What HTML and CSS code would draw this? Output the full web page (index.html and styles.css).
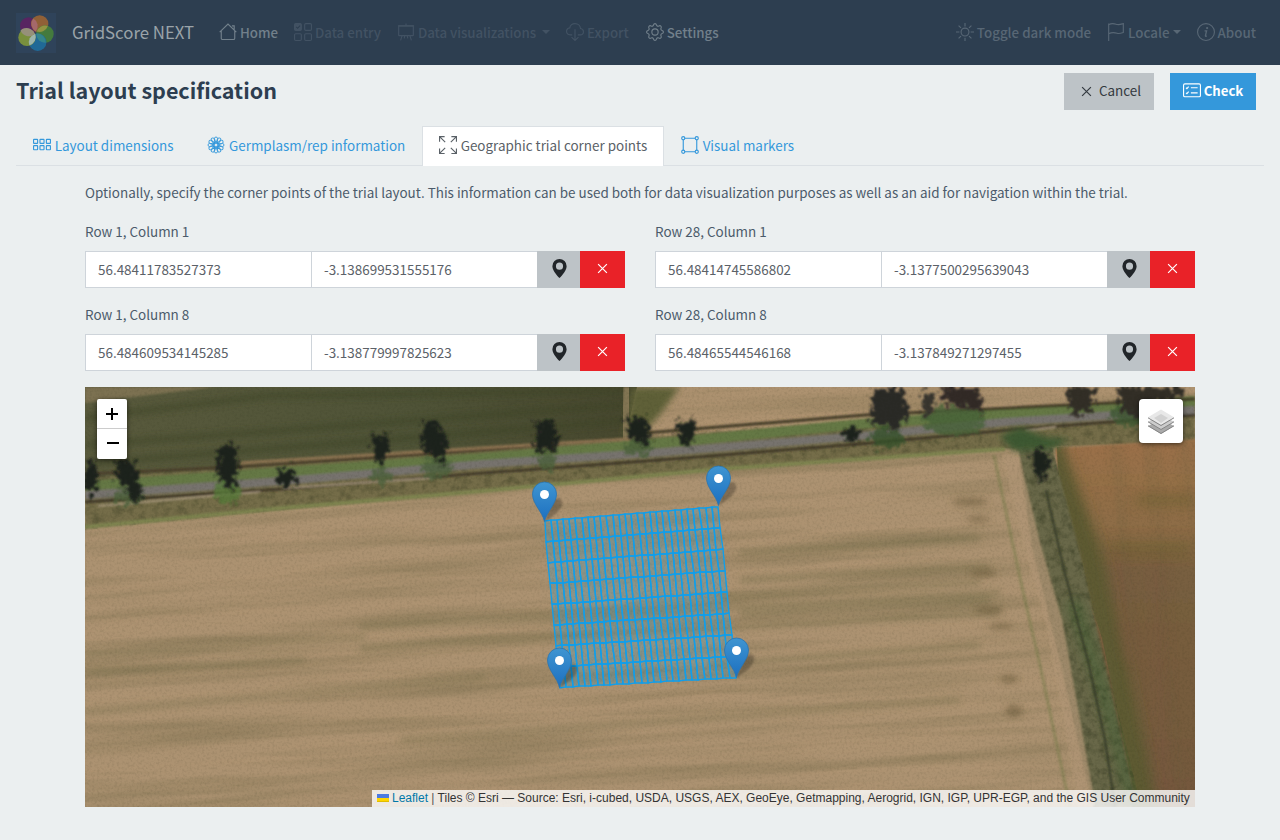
FILE: index.html
```html
<!DOCTYPE html>
<html lang="en">
<head>
<meta charset="utf-8">
<title>GridScore NEXT</title>
<link rel="stylesheet" href="styles.css">
</head>
<body>
<nav class="navbar">
  <svg class="logo" viewBox="0 0 40 40">
    <rect width="40" height="40" fill="#2f435a"/>
    <circle cx="12.700" cy="13" r="8.700" fill="#582461"/>
    <circle cx="23.700" cy="11" r="8.700" fill="#966236" fill-opacity=".95"/>
    <circle cx="29" cy="21" r="8.700" fill="#467d3c" fill-opacity=".95"/>
    <circle cx="21.700" cy="29.200" r="8.700" fill="#206c9a" fill-opacity=".95"/>
    <circle cx="11" cy="24.400" r="8.700" fill="#7d943c" fill-opacity=".95"/>
    <path d="M17.300 5.500a8.700 8.700 0 0 1 2.500 13a8.700 8.700 0 0 1-2.500-13z" fill="#a5686a"/>
    <path d="M20.800 18.500a8.700 8.700 0 0 1 11-5.500a8.700 8.700 0 0 1-11 5.500z" fill="#929443"/>
    <path d="M20.300 20.500a8.700 8.700 0 0 1 9.500 9.200a8.700 8.700 0 0 1-9.500-9.200z" fill="#35858a"/>
    <path d="M19.200 20.700a8.700 8.700 0 0 1-5.800 11.500a8.700 8.700 0 0 1 5.800-11.500z" fill="#9db4ac"/>
    <path d="M4.500 17.500a8.700 8.700 0 0 1 14.300 3.200a8.700 8.700 0 0 1-14.300-3.200z" fill="#96907a"/>
  </svg>
  <span class="brand">GridScore NEXT</span>
  <div class="nav-items">
    <a class="nav-link home"><svg class="icon" viewBox="0 0 16 16"><path d="M.6 8.100 8 .9l7.400 7.200M2 7v6.500a1.200 1.200 0 0 0 1.200 1.200h9.600a1.200 1.200 0 0 0 1.200-1.200V7M11.500 2.500h2v3.800"/></svg><span>Home</span></a>
    <a class="nav-link entry off"><svg class="icon" viewBox="0 0 16 16"><rect x=".5" y=".5" width="6" height="6" rx="1" fill="currentColor"/><rect x="9.500" y=".5" width="6" height="6" rx="1"/><rect x=".5" y="9.500" width="6" height="6" rx="1"/><rect x="9.500" y="9.500" width="6" height="6" rx="1"/><path d="m2 3.500 1.200 1.200 2.200-2.400" stroke="#2d3e50"/></svg><span>Data entry</span></a>
    <a class="nav-link visuals off"><svg class="icon" viewBox="0 0 16 16"><rect x="1.500" y="2.500" width="13" height="8.700" rx=".4"/><path d="M.8 2.500h14.400M8 .5v2M4.500 11.200l-1.300 4.300M11.500 11.200l1.300 4.300M6.800 11.200l-.3 2.500M9.200 11.200l.3 2.500"/></svg><span>Data visualizations</span><i class="caret"></i></a>
    <a class="nav-link export off"><svg class="icon" viewBox="0 0 16 16"><path d="M5.500 10.500H3.800C2 10.500.5 9.200.5 7.400c0-1.600 1.200-2.900 2.900-3.100C3.600 2.100 5.700.5 8 .5c2.600 0 4.700 1.900 4.900 4.400 1.500.2 2.600 1.300 2.600 2.800 0 1.600-1.300 2.800-2.900 2.800h-2.100M8 5.500v10M4.900 12.500 8 15.500l3.100-3"/></svg><span>Export</span></a>
    <a class="nav-link settings"><svg class="icon" viewBox="0 0 16 16"><circle cx="8" cy="8" r="2.800"/><path d="M6.700 1.700c.4-1.500 2.200-1.500 2.600 0a1.400 1.400 0 0 0 2.200.9c1.300-.8 2.600.5 1.900 1.900a1.400 1.400 0 0 0 .9 2.100c1.600.5 1.600 2.300 0 2.800a1.400 1.400 0 0 0-.9 2.100c.7 1.400-.6 2.700-1.900 1.900a1.400 1.400 0 0 0-2.200.9c-.4 1.500-2.200 1.500-2.600 0a1.400 1.400 0 0 0-2.200-.9c-1.300.8-2.600-.5-1.900-1.900a1.400 1.400 0 0 0-.9-2.100c-1.600-.5-1.600-2.300 0-2.800a1.400 1.400 0 0 0 .9-2.100c-.7-1.400.6-2.700 1.900-1.900a1.400 1.400 0 0 0 2.200-.9z"/></svg><span>Settings</span></a>
  </div>
  <div class="nav-items nav-right">
    <a class="nav-link dark"><svg class="icon" viewBox="0 0 16 16"><circle cx="8" cy="8" r="3.500"/><path d="M8 0v3M8 13v3M0 8h3M13 8h3M2.300 2.300l2.100 2.100M11.600 11.600l2.100 2.100M2.300 13.700l2.100-2.100M11.600 4.400l2.100-2.100"/></svg><span>Toggle dark mode</span></a>
    <a class="nav-link locale"><svg class="icon" viewBox="0 0 16 16"><path d="M1.500 16V.5M1.500 1.500C5-.5 7.500 1 9 1.300c2 .5 3.500-.2 5.500-.8v7.900c-2 .7-3.700 1.300-5.500.7-2.500-.8-4-1.300-7.500.4"/></svg><span>Locale</span><i class="caret"></i></a>
    <a class="nav-link about"><svg class="icon" viewBox="0 0 16 16"><circle cx="8" cy="8" r="7.500"/><circle cx="9" cy="4.500" r="1" fill="currentColor" stroke="none"/><path d="M6.700 7h1.800l-1 4.200c-.1.700.5.700 1.200.3" stroke-width="1.200"/></svg><span>About</span></a>
  </div>
</nav>

<header class="page-head">
  <h1>Trial layout specification</h1>
  <button class="btn cancel"><svg class="x-icon" viewBox="0 0 10 10"><path d="m1 1 8 8M9 1 1 9"/></svg><span>Cancel</span></button>
  <button class="btn check"><svg class="icon" viewBox="0 0 16 16"><rect x=".5" y="2.500" width="15" height="11.500" rx="1.200"/><path d="M7 6h6M7 10.500h6M2.700 6l.8.800L5 5M2.700 10.500l.8.800L5 9.500"/></svg><span>Check</span></button>
</header>

<div class="tabs">
  <a class="tab t1"><svg class="icon" viewBox="0 0 16 16"><rect x=".5" y="3" width="3.600" height="3.600" rx=".4"/><rect x="6.200" y="3" width="3.600" height="3.600" rx=".4"/><rect x="11.900" y="3" width="3.600" height="3.600" rx=".4"/><rect x=".5" y="8.600" width="3.600" height="3.600" rx=".4"/><rect x="6.200" y="8.600" width="3.600" height="3.600" rx=".4"/><rect x="11.900" y="8.600" width="3.600" height="3.600" rx=".4"/></svg><span>Layout dimensions</span></a>
  <a class="tab t2"><svg class="icon" viewBox="0 0 16 16"><circle cx="8" cy="8" r="1.900"/><g id="petals"></g></svg><span>Germplasm/rep information</span></a>
  <a class="tab active"><svg class="icon" viewBox="0 0 16 16"><path d="M.5 5V.5H5M.5.5l5 5M11 .5h4.500V5M15.500.5l-5 5M.5 11v4.500H5M.5 15.500l5-5M11 15.500h4.500V11M15.500 15.500l-5-5"/></svg><span>Geographic trial corner points</span></a>
  <a class="tab t4"><svg class="icon" viewBox="0 0 16 16"><path d="M3.200 2h9.600M3.200 14h9.600M2 3.200v9.600M14 3.200v9.600"/><circle cx="2" cy="2" r="1.400"/><circle cx="14" cy="2" r="1.400"/><circle cx="2" cy="14" r="1.400"/><circle cx="14" cy="14" r="1.400"/></svg><span>Visual markers</span></a>
</div>

<main class="content">
  <p class="intro">Optionally, specify the corner points of the trial layout. This information can be used both for data visualization purposes as well as an aid for navigation within the trial.</p>
  <div class="corners">
    <section class="corner"><label>Row 1, Column 1</label><div class="group"><div class="field">56.48411783527373</div><div class="field lng">-3.138699531555176</div><button class="pin"><svg viewBox="0 0 16 16"><path fill-rule="evenodd" d="M8 16s6-5.700 6-10A6 6 0 0 0 2 6c0 4.300 6 10 6 10zm0-7a3 3 0 1 1 0-6 3 3 0 0 1 0 6z"/></svg></button><button class="clear"><svg class="x-icon" viewBox="0 0 10 10"><path d="m1 1 8 8M9 1 1 9"/></svg></button></div></section>
    <section class="corner"><label>Row 28, Column 1</label><div class="group"><div class="field">56.48414745586802</div><div class="field lng">-3.1377500295639043</div><button class="pin"><svg viewBox="0 0 16 16"><path fill-rule="evenodd" d="M8 16s6-5.700 6-10A6 6 0 0 0 2 6c0 4.300 6 10 6 10zm0-7a3 3 0 1 1 0-6 3 3 0 0 1 0 6z"/></svg></button><button class="clear"><svg class="x-icon" viewBox="0 0 10 10"><path d="m1 1 8 8M9 1 1 9"/></svg></button></div></section>
    <section class="corner"><label>Row 1, Column 8</label><div class="group"><div class="field">56.484609534145285</div><div class="field lng">-3.138779997825623</div><button class="pin"><svg viewBox="0 0 16 16"><path fill-rule="evenodd" d="M8 16s6-5.700 6-10A6 6 0 0 0 2 6c0 4.300 6 10 6 10zm0-7a3 3 0 1 1 0-6 3 3 0 0 1 0 6z"/></svg></button><button class="clear"><svg class="x-icon" viewBox="0 0 10 10"><path d="m1 1 8 8M9 1 1 9"/></svg></button></div></section>
    <section class="corner"><label>Row 28, Column 8</label><div class="group"><div class="field">56.48465544546168</div><div class="field lng">-3.137849271297455</div><button class="pin"><svg viewBox="0 0 16 16"><path fill-rule="evenodd" d="M8 16s6-5.700 6-10A6 6 0 0 0 2 6c0 4.300 6 10 6 10zm0-7a3 3 0 1 1 0-6 3 3 0 0 1 0 6z"/></svg></button><button class="clear"><svg class="x-icon" viewBox="0 0 10 10"><path d="m1 1 8 8M9 1 1 9"/></svg></button></div></section>
  </div>

  <div class="map">
    <svg class="terrain" viewBox="85 387 1110 420">
      <defs>
        <filter id="streak" x="0" y="0" width="100%" height="100%" color-interpolation-filters="sRGB"><feTurbulence type="fractalNoise" baseFrequency=".003 .06" numOctaves="4" seed="8"/><feColorMatrix values="0 0 0 0 .42  0 0 0 0 .39  0 0 0 0 .26  2.600 0 0 0 -1.120"/></filter>
        <filter id="light" x="0" y="0" width="100%" height="100%" color-interpolation-filters="sRGB"><feTurbulence type="fractalNoise" baseFrequency=".004 .12" numOctaves="3" seed="21"/><feColorMatrix values="0 0 0 0 .76  0 0 0 0 .63  0 0 0 0 .49  1.800 0 0 0 -.85"/></filter>
        <filter id="grain" x="0" y="0" width="100%" height="100%" color-interpolation-filters="sRGB"><feTurbulence type="fractalNoise" baseFrequency=".4" numOctaves="2" seed="3"/><feColorMatrix values="0 0 0 0 .1  0 0 0 0 .12  0 0 0 0 .05  1.400 0 0 0 -.6"/></filter>
        <filter id="clump" x="0" y="0" width="100%" height="100%" color-interpolation-filters="sRGB"><feTurbulence type="fractalNoise" baseFrequency=".13" numOctaves="3" seed="5"/><feColorMatrix values="0 0 0 0 .18  0 0 0 0 .2  0 0 0 0 .11  2.400 0 0 0 -1.050"/></filter>
        <filter id="rough" x="-30%" y="-30%" width="160%" height="160%"><feTurbulence type="fractalNoise" baseFrequency=".2" numOctaves="3" seed="4" result="n"/><feDisplacementMap in="SourceGraphic" in2="n" scale="20" xChannelSelector="R" yChannelSelector="G"/><feGaussianBlur stdDeviation=".8"/></filter>
        <filter id="soft1" x="-10%" y="-10%" width="120%" height="120%"><feGaussianBlur stdDeviation="1"/></filter>
        <filter id="soft3" x="-30%" y="-30%" width="160%" height="160%"><feGaussianBlur stdDeviation="3"/></filter>
        <filter id="soft5" x="-30%" y="-30%" width="160%" height="160%"><feGaussianBlur stdDeviation="6"/></filter>
        <linearGradient id="brown" x1="0" y1="0" x2="0" y2="1"><stop offset="0" stop-color="#9c7149"/><stop offset=".23" stop-color="#8e6d46"/><stop offset=".36" stop-color="#785f3f"/><stop offset="1" stop-color="#75593d"/></linearGradient>
        <linearGradient id="green" x1="0" y1="0" x2="1" y2="0"><stop offset="0" stop-color="#595a3d"/><stop offset=".6" stop-color="#4f5337"/><stop offset="1" stop-color="#47472e"/></linearGradient>
        <linearGradient id="pinfill" x1="0" y1="0" x2="0" y2="1"><stop offset="0" stop-color="#3f95d1"/><stop offset="1" stop-color="#1c6fc0"/></linearGradient>
        <clipPath id="hedge"><path d="M1016 447h36l29 110 60 250h-48l-34-150-27-110z"/></clipPath>
        <clipPath id="plough"><path d="M1057 447l140-9v370h-60l-35-170-43-130z"/></clipPath>
        <clipPath id="verge"><path d="M85 476 640 435l555-38v44l-190 7-285 20-237 22-398 40z"/></clipPath>
      </defs>

      <rect x="85" y="387" width="1110" height="420" fill="#ac9271"/>
      <path d="M632 387h563v30l-335 10-235 14z" fill="#ad9270"/>

      <g transform="rotate(-3.500 640 600)"><rect x="50" y="330" width="1200" height="530" filter="url(#streak)" opacity=".34"/><rect x="50" y="330" width="1200" height="530" filter="url(#light)" opacity=".16"/></g>
      <g fill="none" stroke="#67653f" filter="url(#soft3)" opacity=".38">
        <path d="M740 553l240-15M740 580l250-13M720 597l260-15M740 614l250-14M360 627l640-34M360 648l640-36M710 665l270-20" stroke-width="6"/>
        <path d="M85 655l280-18M85 672l220-12M85 712l400-35M400 740l560-40" stroke-width="5"/>
      </g>
      <path d="M85 387h552l-12 54-540 39z" fill="url(#green)"/>
      <path d="M85 387h130L85 403z" fill="#7b7151" filter="url(#soft1)"/>
      <path d="M85 418l180-22 365-5M85 445l540-40M90 463l533-42" fill="none" stroke="#3c4427" stroke-width="6" filter="url(#soft3)" opacity=".6"/>
      <path d="M632 387h48l-18 25-22 25h-16z" fill="#5e6038" filter="url(#soft3)"/>
      <path d="M628 387l-4 52" stroke="#827453" stroke-width="9" filter="url(#soft1)"/>

      <path d="M85 478 640 438l200-14 355-24v42l-190 7-285 20-237 22-398 37z" fill="#756d4a" filter="url(#soft1)"/>
      <g clip-path="url(#verge)"><rect x="85" y="387" width="1110" height="150" filter="url(#clump)" opacity=".32"/></g>
      <g fill="none" filter="url(#soft1)">
        <path d="M85 486 483 458l190-16 187-18 335-23" stroke="#657845" stroke-width="10"/>
        <path d="M85 474 235 467l250-17 120-10" stroke="#4a3d29" stroke-width="2.500"/>
        <path d="M240 463l240-15 150-9" stroke="#8f7452" stroke-width="3"/>
        <path d="M645 433l220-18 330-16" stroke="#423b27" stroke-width="3"/>
        <path d="M85 495 283 481l200-17 182-12 195-16 145-14 190-12" stroke="#77736e" stroke-width="8"/>
        <path d="M85 502 283 489l200-16 177-13 200-16 150-14 185-15" stroke="#3c3427" stroke-width="2.500"/>
        <path d="M98 506l162-14M283 488l150-10M1026 431l30-4" stroke="#b3a189" stroke-width="1.500"/>
        <path d="M85 527 283 508l200-17 237-22 285-20" stroke="#7e8450" stroke-width="4"/>
      </g>

      <path d="M1055 448l145-9v370h-67l-33-150-36-130z" fill="url(#brown)" filter="url(#soft1)"/>
      <g clip-path="url(#plough)">
        <path d="M1048 445l40 110 20 90 40 180" stroke="#5d5a32" stroke-width="28" fill="none" filter="url(#soft5)"/>
        <path d="M1135 500h60M1110 550h80" stroke="#6d6131" stroke-width="14" filter="url(#soft5)" opacity=".5"/>
        <path d="M1118 550l15 110M1155 560l10 240" stroke="#7b5844" stroke-width="18" filter="url(#soft5)" opacity=".25"/>
        <g transform="rotate(84 1130 630)"><rect x="850" y="460" width="560" height="340" filter="url(#streak)" opacity=".18"/></g>
      </g>
      <path d="M1018 447h34l29 110 56 250h-44l-34-150-27-110z" fill="#696848" filter="url(#soft1)"/>
      <g clip-path="url(#hedge)"><rect x="1000" y="440" width="150" height="370" filter="url(#clump)" opacity=".42"/><path d="M1073 600l30 90 32 120" stroke="#3c6231" stroke-width="12" fill="none" opacity=".5" filter="url(#soft5)"/></g>
      <path d="M1046 490l18 80 25 95 16 75 10 67" fill="none" stroke="#353a25" stroke-width="2" filter="url(#soft1)"/>
      <path d="M994 455l12 57 16 75 18 78 30 142" fill="none" stroke="#747a47" stroke-width="3" filter="url(#soft1)" opacity=".5"/>
      <path d="M1010 453l22 92 22 77 33 185" fill="none" stroke="#b09575" stroke-width="17" filter="url(#soft1)" opacity=".75"/>
      <g fill="#6d5d3d" filter="url(#soft3)" opacity=".6"><ellipse cx="970" cy="502" rx="18" ry="4"/><ellipse cx="978" cy="519" rx="12" ry="3"/><ellipse cx="983" cy="573" rx="14" ry="4"/><ellipse cx="989" cy="610" rx="15" ry="4"/><ellipse cx="1001" cy="626" rx="13" ry="3"/><ellipse cx="1009" cy="679" rx="10" ry="4"/><ellipse cx="1014" cy="711" rx="9" ry="6"/></g>

      <g filter="url(#rough)" fill="#4b613a" opacity=".8">
        <ellipse cx="128" cy="496" rx="16" ry="9"/><ellipse cx="228" cy="492" rx="14" ry="11" fill="#557838"/><ellipse cx="381" cy="476" rx="11" ry="8"/><ellipse cx="437" cy="468" rx="15" ry="11"/><ellipse cx="546" cy="461" rx="10" ry="9"/><ellipse cx="638" cy="448" rx="15" ry="8"/><ellipse cx="887" cy="438" rx="18" ry="10" fill="#34512c"/><ellipse cx="954" cy="420" rx="32" ry="16" fill="#466237"/><ellipse cx="1136" cy="415" rx="26" ry="12" fill="#3d5931"/>
      </g>
      <path d="M1000 436l20-9 25 10 25 2-18 10-38 2z" fill="#3d5830" filter="url(#soft3)"/>
      <g filter="url(#rough)" fill="#1b201a">
        <ellipse cx="91" cy="478" rx="7" ry="17"/><path d="M117 460l18 2 8 38-9 2-18-26z"/><path d="M218 447l17-2 5 22-7 23-16-10z"/><path d="M277 470l15-2 5 12-9 8-11-4z"/><path d="M370 430l7 9 9-5 4 14-8 18-5-3z"/><path d="M423 423l16 1 9 15-3 28-10-10-13-9z"/><path d="M537 422l16-1 5 17-4 14-10-3-9 2z"/><path d="M626 418l18-1 8 15-7 13-16-8z"/><path d="M677 418l7 6 10-6 2 14-8 17-10-13z"/><ellipse cx="851" cy="434" rx="8" ry="8"/><path d="M874 389h29l6 27-14 14-25-8z" fill="#2c2925"/><path d="M922 390l13 4-4 26-8-5z" fill="#37352d"/><path d="M944 387h34l7 26-23-7-20-5z" fill="#302a25"/><path d="M1066 387h31l-6 24-19 5z" fill="#322d27"/><path d="M1117 387h70l-10 12-24 2-16 18-15-8z" fill="#332e27"/><path d="M1032 451l15-1 5 15-11 16-9-15z"/>
      </g>
      <rect x="85" y="387" width="1110" height="420" filter="url(#grain)" opacity=".15"/>
      <g id="plots"></g>
      <g id="markers"></g>
    </svg>
    <div class="zoom-control"><button><svg viewBox="0 0 30 30"><path d="M9 15h12M15 9v12"/></svg></button><button><svg viewBox="0 0 30 30"><path d="M10 14h12"/></svg></button></div>
    <button class="layers"><svg viewBox="0 0 26 26"><path d="M0 17l13-7 13 7-13 8z" fill="#aaa"/><path d="M0 16.800 13 24.500l13-7.700" fill="none" stroke="#848484"/><path d="M0 12.800l13-7 13 7-13 8z" fill="#ccc"/><path d="M0 12.800 13 20.500l13-7.700" fill="none" stroke="#848484"/><path d="M0 8.300l13-7.800 13 7.800-13 7.700z" fill="#e8e8e8"/><path d="M6 9l7-4 7 4-7 5z" fill="#d2d2d2"/><path d="M0 8.800 13 16.500l13-7.700" fill="none" stroke="#858585"/></svg></button>
    <div class="attribution"><svg viewBox="0 0 12 8"><path fill="#4c7be1" d="M0 0h12v4H0z"/><path fill="#ffd500" d="M0 4h12v3H0z"/><path fill="#e0bc00" d="M0 7h12v1H0z"/></svg><a>Leaflet</a><span class="bar"> | </span>Tiles © Esri — Source: Esri, i-cubed, USDA, USGS, AEX, GeoEye, Getmapping, Aerogrid, IGN, IGP, UPR-EGP, and the GIS User Community</div>
  </div>
</main>
<script src="map.js"></script>
</body>
</html>
```

FILE: styles.css
```css
* { box-sizing: border-box; }
body { margin: 0; width: 1280px; height: 840px; overflow: hidden; background: #ebeff0; color: #4b5b6b; font: 13.44px/22px "Noto Sans CJK SC", "Source Sans Pro", sans-serif; }
button { border: 0; padding: 0; font: inherit; color: inherit; }
.icon { width: 18px; height: 18px; flex: none; fill: none; stroke: currentColor; }
.navbar { height: 65px; background: #2d3e50; display: flex; align-items: center; padding: 0 16px; color: #586775; }
.logo { width: 40px; height: 40px; margin-right: 16px; }
.brand { width: 147px; padding-bottom: 2px; font-size: 16.8px; color: #9aa3a9; white-space: nowrap; }
.nav-items { display: flex; gap: 16px; }
.nav-right { margin-left: auto; padding-right: 8px; }
.nav-link { display: flex; align-items: center; gap: 3px; white-space: nowrap; font-size: 13.3px; font-weight: 500; }
.nav-link .icon { margin-top: -1px; }
.entry, .visuals { letter-spacing: -0.05px; }
.settings { margin-left: 1px; }
.nav-right .nav-link { font-size: 13.35px; }
.home, .settings { color: #72808b; }
.off { color: #425263; }
.caret { width: 0; border: 4px solid transparent; border-top-color: currentColor; border-bottom: 0; margin: -2px 0 0 3px; }
.locale .caret { margin-left: 0; }
.page-head { display: flex; height: 61px; padding: 8px 24px 0 16px; gap: 16px; align-items: flex-start; }
h1 { margin: 0 auto 0 0; font-size: 21.5px; line-height: 34px; color: #2d3e50; font-weight: 700; }
.btn { height: 37px; display: flex; align-items: center; justify-content: center; }
.btn span { padding-bottom: 3px; }
.btn .icon { margin-top: -3px; }
.btn .x-icon { margin-top: -1px; }
.cancel { width: 90px; padding-left: 4px; background: #bdc3c7; color: #343a40; gap: 7px; }
.check { width: 86px; background: #3498db; color: #fff; gap: 3px; font-weight: 700; }
.check span { font-size: 13.2px; padding-bottom: 2px; }
.x-icon { width: 11px; height: 11px; fill: none; stroke: currentColor; stroke-width: 1.1; }
.tabs { margin: 0 16px; height: 40px; display: flex; border-bottom: 1px solid #dbe0e4; color: #3498db; }
.tab { display: flex; align-items: center; gap: 3.5px; height: 40px; padding: 0 15.7px 3px 16.2px; border: 1px solid transparent; border-bottom: 0; white-space: nowrap; }
.tab span { font-size: 13.44px; }
.active { background: #fff; color: #5a6167; border-color: #dbe0e4; }
.content { width: 1110px; margin: 0 auto; }
.intro { margin: 0; height: 54px; padding-top: 15px; white-space: nowrap; }
.corners { display: grid; grid-template-columns: 540px 540px; column-gap: 30px; row-gap: 15px; }
.corner label { display: block; height: 31px; }
.group { display: flex; height: 37px; }
.field { width: 227px; background: #fff; border: 1px solid #ced4da; padding: 0 12px; line-height: 34px; color: #5b6168; }
.lng { margin-left: -1px; width: 226px; border-right: 0; }
.pin { width: 43px; background: #bdc3c7; display: flex; align-items: center; justify-content: center; }
.pin svg { width: 19px; height: 19px; fill: #212529; margin: 0 0 2px 1px; }
.clear { flex: 1; background: #e92228; color: #fff; display: flex; align-items: center; justify-content: center; }
.clear .x-icon { margin-bottom: 2px; }
.map { position: relative; height: 420px; margin-top: 16px; overflow: hidden; font-family: "Liberation Sans", Arial, sans-serif; }
.terrain { display: block; width: 1110px; height: 420px; }
.zoom-control { position: absolute; left: 12px; top: 12px; width: 30px; border-radius: 2px; overflow: hidden; box-shadow: 0 1px 5px #0009; }
.zoom-control button { display: block; width: 30px; height: 30px; background: #fff; }
.zoom-control svg { display: block; width: 30px; height: 30px; fill: none; stroke: #000; stroke-width: 2; }
.zoom-control button:first-child { border-bottom: 1px solid #ccc; }
.layers { position: absolute; right: 12px; top: 12px; width: 44px; height: 44px; border-radius: 4px; background: #fff; box-shadow: 0 1px 5px #0009; display: flex; align-items: center; justify-content: center; }
.layers svg { width: 26px; height: 26px; margin-top: 1px; }
.attribution { position: absolute; right: 0; bottom: 0; width: 823px; height: 17px; padding-left: 5px; background: #ffffffcc; color: #333; font-size: 12px; line-height: 16px; white-space: nowrap; }
.attribution svg { width: 12px; height: 8px; margin-right: 3px; }
.attribution a { color: #0078a8; }
.bar { color: #555; }
```

FILE: map.js
```js
const NS = 'http://www.w3.org/2000/svg';
function add(parent, tag, attrs) {
  const el = document.createElementNS(NS, tag);
  for (const key in attrs) el.setAttribute(key, attrs[key]);
  parent.appendChild(el);
  return el;
}

const petals = document.getElementById('petals');
for (let a = 0; a < 360; a += 30) {
  add(petals, 'path', { d: 'M8 6.1 6.5 2.1A1.55 1.55 0 0 1 9.5 2.1Z', 'stroke-width': 0.8, transform: `rotate(${a} 8 8)` });
}

// Trial plots: 28 rows by 8 columns between the four corner points.
const tl = [544.5, 521], tr = [718, 506.5], bl = [560, 687.5], br = [736, 677.5];
function point(u, v) {
  return [0, 1].map(i => Math.round((1 - v) * ((1 - u) * tl[i] + u * tr[i]) + v * ((1 - u) * bl[i] + u * br[i])));
}
const plots = document.getElementById('plots');
for (let c = 0; c < 8; c++) {
  for (let r = 0; r < 28; r++) {
    const pts = [[r, c], [r + 1, c], [r + 1, c + 1], [r, c + 1]].map(([x, y]) => point(x / 28, y / 8).join());
    add(plots, 'polygon', { points: pts.join(' '), fill: '#119eea', 'fill-opacity': 0.2, stroke: '#119eea', 'stroke-width': 1.4 });
  }
}

const markers = document.getElementById('markers');
for (const [x, y] of [[718.5, 506], [544.5, 522], [736.5, 678], [559.5, 688]]) {
  const g = add(markers, 'g', { transform: `translate(${x} ${y})` });
  add(g, 'path', { d: 'M0 0 6-17Q12-27 17-22Q20-17 12-9Z', fill: '#000', opacity: 0.25, filter: 'url(#soft1)' });
  add(g, 'path', { d: 'M0-.5C-2-10-12-18-12-28A12 12 0 0 1 12-28C12-18 2-10 0-.5Z', fill: 'url(#pinfill)', stroke: '#2c74ad', 'stroke-width': 0.8 });
  add(g, 'circle', { cx: 0, cy: -27.5, r: 4.5, fill: '#fff' });
}
```
